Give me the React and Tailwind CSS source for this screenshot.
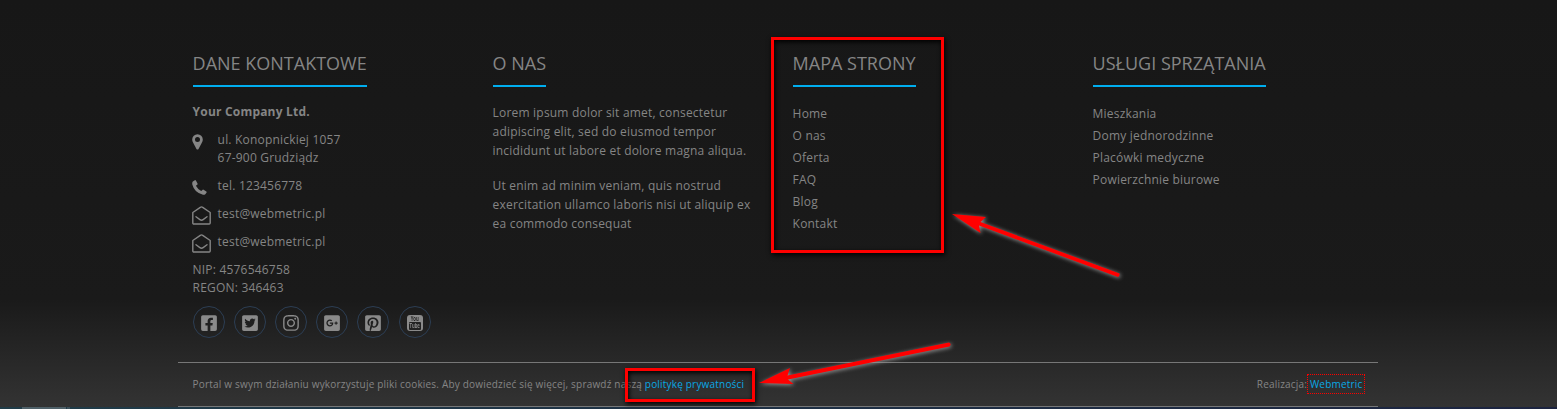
import React from 'react';
import { FaFacebookSquare, FaTwitterSquare, FaInstagram, FaGooglePlusSquare, FaPinterestSquare } from 'react-icons/fa';

function Heading({ children }) {
  return (
    <h3 className="w-fit border-b-2 border-[#00aeef] pb-2 text-[18px] leading-[28px] tracking-normal whitespace-nowrap text-[#858585]">
      {children}
    </h3>
  );
}

function Pin() {
  return (
    <svg className="mt-[2.500px] -ml-[0.5px]" width="11" height="16" viewBox="0 0 11 16" fill="currentColor" fillRule="evenodd">
      <path d="M5.500.3A5.300 5.300 0 0 0 .2 5.600C.2 7.200.8 8 1.300 9L4.600 15.200Q5.500 16 6.400 15.200L9.700 9C10.200 8 10.800 7.200 10.800 5.600A5.300 5.300 0 0 0 5.500.3ZM5.500 3a2.500 2.500 0 1 1 0 5 2.500 2.500 0 0 1 0-5Z" />
    </svg>
  );
}

function EnvelopeOpen() {
  return (
    <svg className="mt-[0.9px] -ml-[0.5px]" width="19" height="19" viewBox="0 0 19 19" fill="none" stroke="currentColor" strokeWidth="1.4" strokeLinejoin="round" strokeLinecap="round">
      <path d="M.8 6.5 8.300 1.300q1.200-.8 2.400 0l7.500 5.200v10.500a1 1 0 0 1-1 1H1.800a1 1 0 0 1-1-1Z" />
      <path d="m4 10.700 3.900 2.900q1.600 1.200 3.200 0l3.900-2.900" />
    </svg>
  );
}

function Phone() {
  return (
    <svg className="mt-[3px] -ml-[0.5px]" width="15" height="15" viewBox="0 0 15 15" fill="currentColor">
      <path d="M.8 1.500 2.800.2Q3.500-.1 3.900.5L5.500 3.500Q5.800 4.200 5.200 4.700L3.900 5.800Q5.500 9 9.200 11.100L10.400 9.900Q10.900 9.400 11.600 9.800L14.300 11.400Q14.900 11.900 14.600 12.500L13.300 14.200Q12.400 14.900 11 14.700 2.500 13 .3 4.600 0 2.500.8 1.500Z" />
    </svg>
  );
}

function YoutubeSquare() {
  return (
    <span className="flex h-[16px] w-[16px] flex-col items-center overflow-hidden rounded-[3px] bg-[#8a8a8a] tracking-normal text-[#222]">
      <span className="h-[6px] scale-x-60 text-[7px] leading-[7px] font-bold">You</span>
      <span className="mt-[1px] flex h-[8px] w-[12px] items-center justify-center rounded-[1px] bg-[#222] text-[#8a8a8a]">
        <span className="scale-x-60 text-[7px] leading-[8px] font-bold">Tube</span>
      </span>
    </span>
  );
}

function ContactRow({ icon, children }) {
  return (
    <div className="mt-[10px] flex">
      <span className="flex h-[18px] w-[25px] shrink-0 items-start">{icon}</span>
      <span>{children}</span>
    </div>
  );
}

function Links({ items }) {
  return (
    <ul className="mt-[16px] leading-[22px]">
      {items.map((item) => (
        <li key={item}><a href="#">{item}</a></li>
      ))}
    </ul>
  );
}

const socials = [
  <FaFacebookSquare size={18} />,
  <FaTwitterSquare size={18} />,
  <FaInstagram size={18} />,
  <FaGooglePlusSquare size={18} />,
  <FaPinterestSquare size={18} />,
  <YoutubeSquare />,
];

export default function App() {
  return (
    <div className="relative flex h-[409px] w-[1557px] flex-col overflow-hidden bg-[linear-gradient(#171717_0px,#1a1a1a_300px,#333333_407px)] font-['Open_Sans',sans-serif] text-[12px] tracking-[0.195px] text-[#858585]">
      <div className="ml-[178px] flex h-[362px] w-[1200px] pt-[49px]">
        <section className="w-[300px] pl-[14.6px] leading-[18px]">
          <Heading>DANE KONTAKTOWE</Heading>
          <p className="mt-[16px] font-bold">Your Company Ltd.</p>
          <ContactRow icon={<Pin />}>
            ul. Konopnickiej 1057<br />67-900 Grudziądz
          </ContactRow>
          <ContactRow icon={<Phone />}>tel. 123456778</ContactRow>
          <ContactRow icon={<EnvelopeOpen />}>test@webmetric.pl</ContactRow>
          <ContactRow icon={<EnvelopeOpen />}>test@webmetric.pl</ContactRow>
          <p className="mt-[10px]">NIP: 4576546758<br />REGON: 346463</p>
          <div className="mt-[9px] flex gap-[9.200px]">
            {socials.map((icon, i) => (
              <a key={i} href="#" className="flex size-[32px] items-center justify-center rounded-full border border-[#2c3e54] pt-[2px] text-[#8a8a8a]">{icon}</a>
            ))}
          </div>
        </section>
        <section className="w-[300px] pl-[14.6px] leading-[19px] whitespace-nowrap">
          <Heading>O NAS</Heading>
          <p className="mt-[16px]">Lorem ipsum dolor sit amet, consectetur<br />adipiscing elit, sed do eiusmod tempor<br />incididunt ut labore et dolore magna aliqua.</p>
          <p className="mt-[16px]">Ut enim ad minim veniam, quis nostrud<br />exercitation ullamco laboris nisi ut aliquip ex<br />ea commodo consequat</p>
        </section>
        <section className="w-[300px] pl-[14.6px]">
          <Heading>MAPA STRONY</Heading>
          <Links items={['Home', 'O nas', 'Oferta', 'FAQ', 'Blog', 'Kontakt']} />
        </section>
        <section className="w-[300px] pl-[14.6px]">
          <Heading>USŁUGI SPRZĄTANIA</Heading>
          <Links items={['Mieszkania', 'Domy jednorodzinne', 'Placówki medyczne', 'Powierzchnie biurowe']} />
        </section>
      </div>
      <div className="ml-[178px] flex h-[45px] w-[1200px] items-center justify-between border-y border-[#777] pr-[15.5px] pl-[14.6px] text-[10px] tracking-[0.195px]">
        <p>Portal w swym działaniu wykorzystuje pliki cookies. Aby dowiedzieć się więcej, sprawdź naszą <a href="#" className="text-[#08a9e6]">politykę prywatności</a></p>
        <p>Realizacja: <a href="#" className="text-[#08a9e6]">Webmetric</a></p>
      </div>
      <div className="flex h-[2px] bg-[linear-gradient(90deg,#203c48,#1e3045_50%,#1c2440)] pl-[22px]">
        <span className="w-[44px] bg-[#4e6068]" />
        <span className="ml-px w-[3px] bg-[#3b505a]" />
      </div>
      <div className="absolute top-[37px] left-[771px] h-[216px] w-[173px] border-3 border-[#ff0000] shadow-[1px_2px_5px_#000,inset_1px_2px_5px_#000]" />
      <div className="absolute top-[368px] left-[625px] h-[34px] w-[130px] border-3 border-[#ff0000] shadow-[1px_2px_5px_#000,inset_1px_2px_5px_#000]" />
      <div className="absolute top-[374px] left-[1307px] h-[20px] w-[58px] border border-dotted border-[#ff0000]" />
      <svg className="absolute inset-0 drop-shadow-[1px_1px_2px_#999]" width="1557" height="409" fill="#ff0000" stroke="none">
        <path d="M952 214 986 217 980.500 222 1119.500 273.500Q1120 276 1118 277L979 225.500 980.500 233Z" />
        <path d="M759 383 790 368 787.500 375.500 949 342.500Q952 344 949.500 346.500L788 379.500 793.500 384Z" />
      </svg>
    </div>
  );
}
